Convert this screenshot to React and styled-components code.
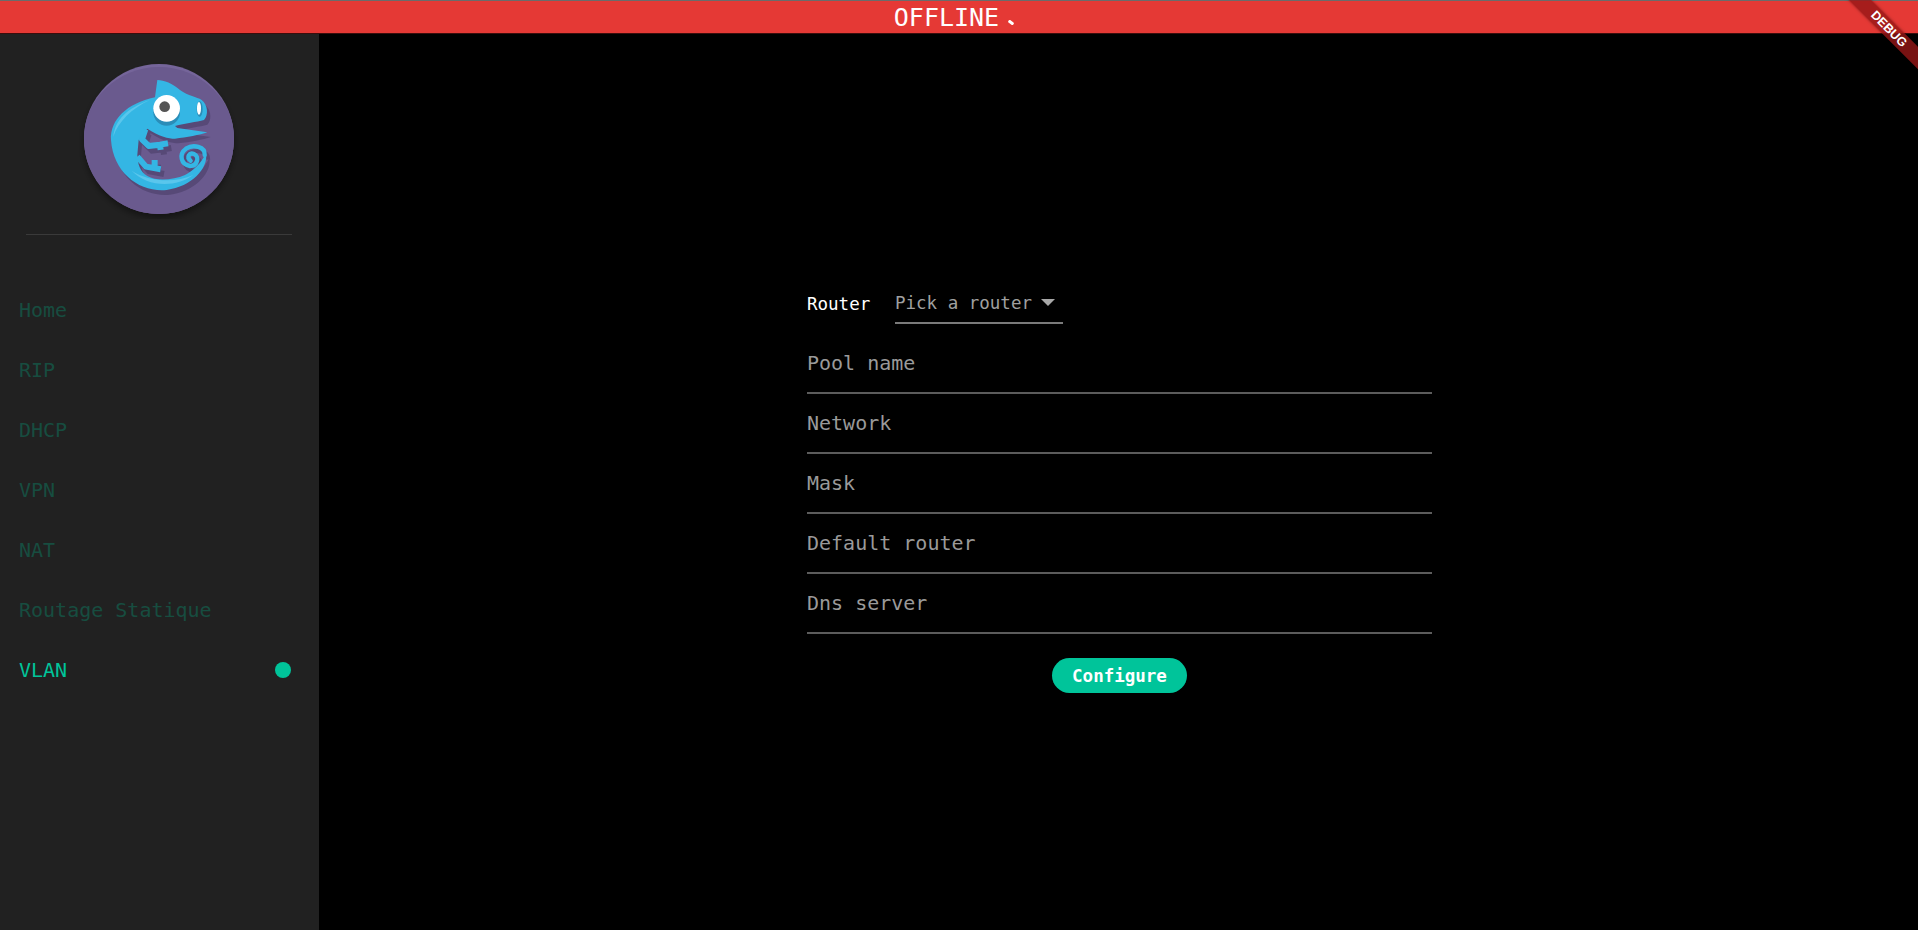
import React from 'react';
import styled, { createGlobalStyle } from 'styled-components';

const MONO = '"DejaVu Sans Mono", "Liberation Mono", monospace';

const Global = createGlobalStyle`
  html, body { margin: 0; padding: 0; height: 100%; background: #000; }
  #root { height: 100%; }
  * { box-sizing: border-box; }
`;

const Page = styled.div`
  width: 1918px;
  height: 930px;
  display: flex;
  flex-direction: column;
  position: relative;
  overflow: hidden;
  background: #000;
  font-family: ${MONO};
`;

const StatusBar = styled.div`
  height: 34px;
  flex: none;
  background: #e53935;
  border-top: 1px solid #6b6b6b;
  border-bottom: 1px solid #3a0d0c;
  color: #fff;
  font-size: 25px;
  display: flex;
  align-items: center;
  justify-content: center;
  padding-left: 3px;
`;

const Dots = styled.span`
  display: block;
  width: 28px;
  height: 32px;
  position: relative;
`;

const Dot = styled.i`
  position: absolute;
  left: 9px;
  top: 20px;
  width: 6px;
  height: 3px;
  background: #fff;
  border-radius: 1px;
  transform: rotate(35deg);
`;

const Ribbon = styled.div`
  position: absolute;
  top: 21px;
  right: -41px;
  width: 140px;
  height: 16px;
  background: rgba(150, 22, 22, 0.8);
  color: #fff;
  font-family: "Liberation Sans", sans-serif;
  font-weight: 700;
  font-size: 12.5px;
  line-height: 16px;
  text-align: center;
  transform: rotate(45deg);
  box-shadow: 0 0 3px rgba(0, 0, 0, 0.35);
`;

const Body = styled.div`
  flex: 1;
  display: flex;
  min-height: 0;
`;

const Sidebar = styled.aside`
  width: 319px;
  flex: none;
  background: #212121;
  display: flex;
  flex-direction: column;
`;

const LogoWrap = styled.div`
  height: 201px;
  margin: 0 27px 0 26px;
  border-bottom: 1px solid #3a3a3a;
  display: flex;
  justify-content: center;
  padding-top: 25px;
`;

const Nav = styled.nav`
  display: flex;
  flex-direction: column;
  padding-top: 45px;
`;

const NavItem = styled.div`
  height: 60px;
  display: flex;
  align-items: center;
  justify-content: space-between;
  padding: 0 28px 0 19px;
  font-size: 20px;
  color: ${({ $active }) => ($active ? '#00c49a' : '#174d40')};
`;

const ActiveDot = styled.span`
  width: 16px;
  height: 16px;
  border-radius: 50%;
  background: #00c49a;
`;

const Main = styled.main`
  flex: 1;
  display: flex;
  justify-content: center;
  padding: 249px 0 0 2px;
`;

const Form = styled.form`
  width: 625px;
  display: flex;
  flex-direction: column;
`;

const RouterRow = styled.div`
  display: flex;
  align-items: center;
  height: 41px;
  margin-bottom: 10px;
`;

const RouterLabel = styled.label`
  color: #fff;
  font-size: 17.5px;
  width: 88px;
`;

const Select = styled.div`
  width: 168px;
  height: 41px;
  border-bottom: 2px solid #7a7a7a;
  color: #a0a0a0;
  font-size: 17.5px;
  display: flex;
  align-items: center;
  justify-content: space-between;
  padding: 0 8px 0 0;
`;

const Caret = styled.span`
  width: 0;
  height: 0;
  border-left: 7px solid transparent;
  border-right: 7px solid transparent;
  border-top: 7px solid #a8a8a8;
`;

const Field = styled.div`
  height: 60px;
  border-bottom: 2px solid #5c5c5c;
  color: #9a9a9a;
  font-size: 20px;
  display: flex;
  align-items: center;
`;

const ButtonRow = styled.div`
  display: flex;
  justify-content: center;
  padding-top: 24px;
`;

const Button = styled.button`
  width: 135px;
  height: 35px;
  border: none;
  border-radius: 18px;
  background: #00c49a;
  color: #fff;
  font-family: ${MONO};
  font-weight: 700;
  font-size: 17.5px;
  padding: 0;
`;

const BODY_PATH =
  'M292 120 C312 120 338 130 360 150 C385 168 410 170 425 180 C444 195 446 225 432 240 C410 246 375 250 345 258 L352 264 L442 277 C420 285 380 292 345 296 C325 296 300 290 262 266 L236 300 L232 345 C234 375 240 395 262 408 C290 425 340 420 375 405 C400 392 422 372 438 340 C446 385 395 440 320 450 C240 458 160 400 153 300 C150 240 200 190 285 172 Z';

const FRONT_LEG = 'M256 268 L246 298 L266 318 L300 314 L302 330 M300 314 L324 310';
const REAR_LEG = 'M232 350 L258 380 L302 388 M284 360 L284 384';
const SPIRAL = 'M434 345 C436 320 400 312 378 326 C356 342 362 374 390 378 C412 378 420 350 402 342 C388 336 378 352 392 362';

const Chameleon = () => (
  <g transform="translate(-19 -19) scale(0.3333)">
    <g transform="translate(10 14)" opacity="0.45">
      <path d={BODY_PATH} fill="#40365c" />
      <path d={FRONT_LEG} stroke="#40365c" strokeWidth="18" fill="none" />
      <path d={REAR_LEG} stroke="#40365c" strokeWidth="18" fill="none" />
      <path d={SPIRAL} stroke="#40365c" strokeWidth="13" fill="none" />
    </g>
    <path d={BODY_PATH} fill="#34b6e4" />
    <path d="M215 392 C260 440 345 445 400 405 C345 430 265 425 215 392 Z" fill="#5ac6ec" />
    <path d="M160 290 C165 240 200 205 270 180 C215 205 175 245 160 290 Z" fill="#5ac6ec" />
    <path d={FRONT_LEG} stroke="#34b6e4" strokeWidth="18" strokeLinejoin="round" fill="none" />
    <path d={REAR_LEG} stroke="#34b6e4" strokeWidth="18" strokeLinejoin="round" fill="none" />
    <path d={SPIRAL} stroke="#34b6e4" strokeWidth="13" strokeLinecap="round" fill="none" />
    <circle cx="320" cy="217" r="40" fill="#2a8db8" />
    <circle cx="320" cy="205" r="40" fill="#fff" />
    <circle cx="314" cy="200" r="16" fill="#555" />
    <ellipse cx="419" cy="207" rx="9" ry="23" fill="#2a8db8" />
    <ellipse cx="417" cy="205" rx="6" ry="19" fill="#fff" />
  </g>
);

const Logo = () => (
  <svg width="160" height="160" viewBox="0 0 160 160">
    <defs>
      <filter id="logo-shadow" x="-20%" y="-20%" width="140%" height="140%">
        <feDropShadow dx="0" dy="4" stdDeviation="3" floodColor="#000" floodOpacity="0.4" />
      </filter>
      <clipPath id="logo-clip">
        <circle cx="80" cy="80" r="75" />
      </clipPath>
    </defs>
    <circle cx="80" cy="80" r="75" fill="#75659a" filter="url(#logo-shadow)" />
    <g clipPath="url(#logo-clip)">
      <circle cx="80" cy="85" r="77" fill="#6a5a8e" />
      <Chameleon />
    </g>
  </svg>
);

const links = ['Home', 'RIP', 'DHCP', 'VPN', 'NAT', 'Routage Statique', 'VLAN'];
const fields = ['Pool name', 'Network', 'Mask', 'Default router', 'Dns server'];

export default function App() {
  return (
    <Page>
      <Global />
      <StatusBar>
        OFFLINE
        <Dots>
          <Dot />
        </Dots>
      </StatusBar>
      <Body>
        <Sidebar>
          <LogoWrap>
            <Logo />
          </LogoWrap>
          <Nav>
            {links.map((l) => (
              <NavItem key={l} $active={l === 'VLAN'}>
                {l}
                {l === 'VLAN' && <ActiveDot />}
              </NavItem>
            ))}
          </Nav>
        </Sidebar>
        <Main>
          <Form>
            <RouterRow>
              <RouterLabel>Router</RouterLabel>
              <Select>
                Pick a router
                <Caret />
              </Select>
            </RouterRow>
            {fields.map((f) => (
              <Field key={f}>{f}</Field>
            ))}
            <ButtonRow>
              <Button type="button">Configure</Button>
            </ButtonRow>
          </Form>
        </Main>
      </Body>
      <Ribbon>DEBUG</Ribbon>
    </Page>
  );
}
